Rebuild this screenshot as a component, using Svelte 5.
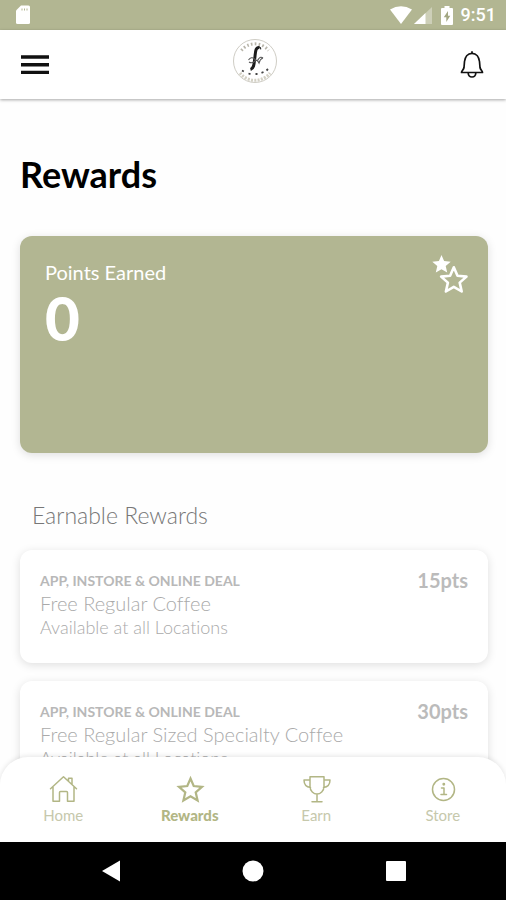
<script>
  const rewards = [
    { tag: 'APP, INSTORE & ONLINE DEAL', title: 'Free Regular Coffee', place: 'Available at all Locations', points: 15 },
    { tag: 'APP, INSTORE & ONLINE DEAL', title: 'Free Regular Sized Specialty Coffee', place: 'Available at all Locations', points: 30 }
  ];
  const tabs = [
    { id: 'home', label: 'Home' },
    { id: 'rewards', label: 'Rewards' },
    { id: 'earn', label: 'Earn' },
    { id: 'store', label: 'Store' }
  ];
  let active = $state('rewards');
</script>

<div class="app">
  <div class="status">
    <svg width="16" height="20" viewBox="0 0 16 20" aria-hidden="true">
      <path d="M6 .5h7.500a1.500 1.500 0 0 1 1.500 1.500v15.500a1.500 1.500 0 0 1-1.500 1.500h-11a1.500 1.500 0 0 1-1.500-1.500V5.500z" fill="#fff" />
      <path d="M7 3.500v2M9.500 3.500v2M12 3.500v2" stroke="#b2b692" stroke-width="1" />
    </svg>
    <div class="status-right">
      <svg width="22" height="18" viewBox="0 0 22 18" aria-hidden="true">
        <path d="M0 3.500Q11-3.200 22 3.500L11 18z" fill="#fff" />
      </svg>
      <svg class="signal" width="18" height="17" viewBox="0 0 18 17" aria-hidden="true">
        <path d="M0 17L18 0v17z" fill="#fff" opacity=".35" />
        <path d="M0 17L11.500 6v11z" fill="#fff" />
      </svg>
      <svg class="battery" width="12" height="19" viewBox="0 0 12 19" aria-hidden="true">
        <path d="M3.500 0h5v2H11a1 1 0 0 1 1 1v15a1 1 0 0 1-1 1H1a1 1 0 0 1-1-1V3a1 1 0 0 1 1-1h2.500z" fill="#fff" />
        <path d="M7 5L2.800 11.200h2.500V16l4-6.300H7z" fill="#a3a783" />
      </svg>
      <time>9:51</time>
    </div>
  </div>

  <header>
    <button class="icon" aria-label="Menu">
      <svg width="28" height="20" viewBox="0 0 28 20">
        <path d="M0 2h28M0 9.700h28M0 17.400h28" stroke="#111" stroke-width="3.400" />
      </svg>
    </button>
    <svg class="logo" width="46" height="46" viewBox="0 0 46 46" role="img" aria-label="Logo">
      <circle cx="23" cy="23" r="21.500" fill="#fff" stroke="#cfcdc5" stroke-width="1" />
      <path d="M9.500 12.500A17 17 0 0 1 36.500 12.500" fill="none" stroke="#b8b5aa" stroke-width="3" stroke-dasharray="1.600 2.200" />
      <path d="M8 35A19 19 0 0 0 38 35" fill="none" stroke="#d3d0c4" stroke-width="3" stroke-dasharray="2 1.300" />
      <path d="M27.500 9.500C23 9 23.500 15 22.800 20s-.5 10.500-4.300 11.500" fill="none" stroke="#1c1c1c" stroke-width="3" />
      <path d="M27 9.500q2-.8 1.500 1.800" fill="none" stroke="#333" stroke-width="1.300" />
      <path d="M16.500 22q3-4 6-1t4 0q2-3 4.500-1M17 24q3 2 6-1 2-2 4 2 1-4 4-5" fill="none" stroke="#555" stroke-width="1.100" />
      <path d="M10 32.500l1.800 1M16.500 35.500l2 .6M23.500 36h2M29.500 34.800l2-.8M34.500 32.500l1.500-1.500" stroke="#444" stroke-width="1.800" />
    </svg>
    <button class="icon" aria-label="Notifications">
      <svg width="24" height="28" viewBox="0 0 24 28">
        <path d="M12 2.300C7.500 2.300 5 6.500 4.500 10.500L4 16.500c-.3 2-2.500 3.500-2.500 5h21c0-1.500-2.200-3-2.500-5l-.5-6C19 6.500 16.500 2.300 12 2.300z" fill="none" stroke="#111" stroke-width="1.700" stroke-linejoin="round" />
        <path d="M12 .3v2M8.200 22c.3 5.300 7.300 5.300 7.600 0" fill="none" stroke="#111" stroke-width="1.700" />
      </svg>
    </button>
  </header>

  <main>
    <h1>Rewards</h1>
    <section class="points">
      <div>
        <p class="label">Points Earned</p>
        <p class="value">0</p>
      </div>
      <svg width="36" height="40" viewBox="0 0 36 40" aria-hidden="true">
        <path d="M9.500 0l2.600 6.100 6.600.6-5 4.400 1.500 6.500-5.700-3.400-5.700 3.400 1.500-6.500-5-4.400 6.600-.6z" fill="#fff" />
        <path d="M21.800 12.300l3.700 8.400 9 .9-6.800 6 2 8.900-7.900-4.700-7.900 4.700 2-8.900-6.800-6 9-.9z" fill="#b2b692" stroke="#fff" stroke-width="2.600" stroke-linejoin="round" />
      </svg>
    </section>

    <h2>Earnable Rewards</h2>
    <ul>
      {#each rewards as reward}
        <li>
          <div>
            <p class="tag">{reward.tag}</p>
            <h3>{reward.title}</h3>
            <p class="place">{reward.place}</p>
          </div>
          <strong>{reward.points}pts</strong>
        </li>
      {/each}
    </ul>
  </main>

  <nav>
    {#each tabs as tab}
      <button class:active={active === tab.id} onclick={() => (active = tab.id)}>
        <svg width="30" height="30" viewBox="0 0 30 30" fill="none" stroke="#b2b685" stroke-width="1.500" stroke-linejoin="round" stroke-linecap="round" aria-hidden="true">
          {#if tab.id === 'home'}
            <path d="M2.500 14.800L15.500 2.800l13 12M5 13v14.200h6.500v-8.700q0-1 1-1h6q1 0 1 1v8.700H26V13M20.500 7V4.200H24v6.300" />
          {:else if tab.id === 'rewards'}
            <path d="M15.500 4.500l3.200 7.500 8.300.8-6.300 5.500 1.900 8.200-7.100-4.300-7.100 4.300 1.900-8.200L4 12.800l8.300-.8z" stroke-width="2.200" stroke-linejoin="miter" />
          {:else if tab.id === 'earn'}
            <path d="M9 2.800h14v9.700c0 4.500-3.700 7.500-7 7.500s-7-3-7-7.500zM9 6H3c0 4.500 2 7 6.500 7.500M23 6h6c0 4.500-2 7-6.500 7.500M16 20v7.700M11 27.700h10" />
          {:else}
            <circle cx="15.500" cy="15.500" r="11" />
            <path d="M13.500 14H16v6.500M13 20.500h5.500" stroke-width="1.500" />
            <circle cx="15.800" cy="10.300" r=".7" fill="#b2b685" />
          {/if}
        </svg>
        <span>{tab.label}</span>
      </button>
    {/each}
  </nav>

  <div class="system">
    <button aria-label="Back">
      <svg width="20" height="22" viewBox="0 0 20 22"><path d="M20 .5v21L2 11z" fill="#fff" /></svg>
    </button>
    <button aria-label="Home screen">
      <svg width="22" height="22" viewBox="0 0 22 22"><circle cx="11" cy="11" r="10.500" fill="#fff" /></svg>
    </button>
    <button aria-label="Recent apps">
      <svg width="20" height="20" viewBox="0 0 20 20"><rect width="20" height="20" rx="1" fill="#fff" /></svg>
    </button>
  </div>
</div>

<style>
  :global(body) {
    margin: 0;
    background: #fefefe;
  }
  .app {
    display: flex;
    flex-direction: column;
    height: 100vh;
    overflow: hidden;
    background: #fefefe;
    font-family: Lato, sans-serif;
    font-variant-ligatures: none;
  }
  h1, h2, h3, p, ul {
    margin: 0;
    padding: 0;
  }
  button {
    border: 0;
    padding: 0;
    background: none;
    font: inherit;
    cursor: pointer;
  }
  svg {
    display: block;
  }
  .status {
    flex: none;
    display: flex;
    align-items: center;
    justify-content: space-between;
    height: 30px;
    padding: 0 10px 0 15px;
    background: #b2b692;
  }
  .status-right {
    display: flex;
    align-items: center;
  }
  .signal {
    margin-left: 2px;
  }
  .battery {
    margin: 0 8px 0 9px;
  }
  time {
    font: 500 18px/30px Roboto, sans-serif;
    color: #fff;
  }
  header {
    flex: none;
    display: flex;
    align-items: center;
    justify-content: space-between;
    height: 69px;
    padding: 0 22px 0 21px;
    background: #fff;
    box-shadow: 0 1px 3px rgba(0, 0, 0, 0.35);
    z-index: 1;
  }
  .logo {
    margin-bottom: 8px;
  }
  main {
    flex: 1;
    min-height: 0;
    overflow: hidden;
    padding: 54px 18px 0 20px;
  }
  h1 {
    font-size: 36px;
    line-height: 42px;
    font-weight: 700;
    color: #000;
  }
  .points {
    display: flex;
    justify-content: space-between;
    align-items: flex-start;
    box-sizing: border-box;
    min-height: 217px;
    margin-top: 41px;
    padding: 19px 20px 20px 25px;
    border-radius: 12px;
    background: #b2b692;
    box-shadow: 0 2px 10px rgba(0, 0, 0, 0.13);
    color: #fff;
  }
  .label {
    padding-top: 5px;
    font-size: 20px;
    line-height: 24px;
  }
  .value {
    font-size: 60px;
    line-height: 68px;
    font-weight: 900;
  }
  h2 {
    margin: 48px 0 0 12px;
    font-size: 23px;
    line-height: 28px;
    font-weight: 300;
    color: #777;
  }
  ul {
    display: grid;
    gap: 18px;
    margin-top: 21px;
    list-style: none;
  }
  li {
    display: flex;
    justify-content: space-between;
    box-sizing: border-box;
    min-height: 113px;
    padding: 20px;
    border-radius: 12px;
    background: #fff;
    box-shadow: 0 2px 10px rgba(0, 0, 0, 0.13);
    color: #aaa;
  }
  .tag {
    font-size: 14px;
    line-height: 22px;
    font-weight: 700;
    color: #b8b8b8;
  }
  h3 {
    font-size: 20px;
    line-height: 22px;
    font-weight: 300;
  }
  .place {
    font-size: 18px;
    line-height: 26px;
    font-weight: 300;
  }
  strong {
    font-size: 20px;
    line-height: 20px;
    font-weight: 700;
    color: #bbb;
  }
  nav {
    flex: none;
    display: grid;
    grid-template-columns: repeat(4, 1fr);
    box-sizing: border-box;
    height: 85px;
    margin-top: -28px;
    padding-top: 17px;
    border-radius: 28px 28px 0 0;
    background: #fff;
    box-shadow: 0 -1px 5px rgba(0, 0, 0, 0.1);
    z-index: 1;
  }
  nav button {
    display: flex;
    flex-direction: column;
    align-items: center;
    font-size: 15px;
    line-height: 22px;
    color: #c6c8ac;
  }
  nav .active {
    font-weight: 900;
    color: #b2b685;
  }
  .system {
    flex: none;
    display: flex;
    align-items: center;
    justify-content: space-between;
    height: 58px;
    padding: 0 100px;
    background: #000;
    z-index: 2;
  }
</style>
